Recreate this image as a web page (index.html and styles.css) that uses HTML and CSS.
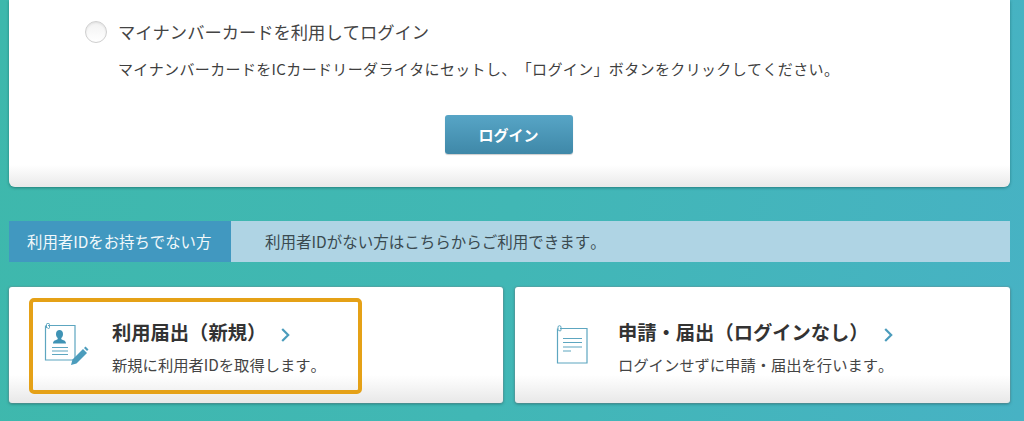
FILE: index.html
```html
<!DOCTYPE html>
<html lang="ja">
<head>
<meta charset="utf-8">
<title>ログイン</title>
<link rel="stylesheet" href="styles.css">
</head>
<body>
<main class="page">
  <section class="panel">
    <label class="radio-row">
      <span class="radio"></span>
      <span class="radio-label">マイナンバーカードを利用してログイン</span>
    </label>
    <p class="radio-note">マイナンバーカードをICカードリーダライタにセットし、「ログイン」ボタンをクリックしてください。</p>
    <div class="actions"><button class="login" type="button">ログイン</button></div>
  </section>

  <section class="info">
    <h2 class="info-head">利用者IDをお持ちでない方</h2>
    <p class="info-text">利用者IDがない方はこちらからご利用できます。</p>
  </section>

  <section class="cards">
    <a class="card card-new">
      <svg class="icon icon-new" width="46" height="44" viewBox="0 0 46 44" fill="none">
        <path d="M4 2.500H31V37H1.500V2.500" stroke="#5da6c0" stroke-width="1.200"/>
        <path d="M2.500 5V1.700a1.500 1.500 0 0 1 3 0V4.500a1 1 0 0 1-2 0" stroke="#5da6c0" stroke-width="1"/>
        <path d="M9 20.500c0-3 3-3.200 4.700-4.200V15c-1.200-1-1.700-2.300-1.700-4 0-2.600 1.500-4 3.500-4s3.500 1.400 3.500 4c0 1.700-.5 3-1.700 4v1.300c1.700 1 4.700 1.200 4.700 4.200z" fill="#3f93b5"/>
        <path d="M8 24.500H24M8 28H24M8 31.500H24" stroke="#5da6c0" stroke-width="1.200"/>
        <path d="M27 42l1.500-5.500L39 26l4 4-10.500 10.500z" fill="#4b9cbc"/>
        <path d="M40 25l1.500-1.500 3 3-1.500 1.500z" fill="#4b9cbc"/>
      </svg>
      <span class="card-body">
        <span class="card-title">利用届出（新規）<svg class="chev" width="9" height="14" viewBox="0 0 9 14" fill="none"><path d="M1.200 1l6 6-6 6" stroke="#4b9cbc" stroke-width="2.200"/></svg></span>
        <span class="card-desc">新規に利用者IDを取得します。</span>
      </span>
    </a>
    <a class="card card-guest">
      <svg class="icon icon-guest" width="34" height="40" viewBox="0 0 34 40" fill="none">
        <path d="M4 3.500H31V38H1.500V3.500" stroke="#5da6c0" stroke-width="1.200"/>
        <path d="M2 6V2.200a1.500 1.500 0 0 1 3 0V5a1 1 0 0 1-2 0" stroke="#5da6c0" stroke-width="1"/>
        <path d="M7 13.500H26M7 17.500H26M7 22H26M7 26H15" stroke="#5da6c0" stroke-width="1.200"/>
      </svg>
      <span class="card-body">
        <span class="card-title">申請・届出（ログインなし）<svg class="chev" width="9" height="14" viewBox="0 0 9 14" fill="none"><path d="M1.200 1l6 6-6 6" stroke="#4b9cbc" stroke-width="2.200"/></svg></span>
        <span class="card-desc">ログインせずに申請・届出を行います。</span>
      </span>
    </a>
  </section>
  <div class="highlight"></div>
</main>
</body>
</html>
```
FILE: styles.css
```css
* { box-sizing: border-box; }
html, body { margin: 0; height: 421px; overflow: hidden; }
body {
  background: linear-gradient(100deg, #3eb8ac 0%, #41b7b5 50%, #47b2c4 100%);
  font-family: "Noto Sans CJK JP", "Liberation Sans", sans-serif;
  color: #3a3a3a;
  text-spacing-trim: space-all;
  font-kerning: none;
}
.page { position: relative; height: 421px; padding: 0 14px 0 9px; }
.panel {
  height: 187px;
  padding: 19px 0 0 76px;
  background: linear-gradient(to bottom, #fff 0, #fff 165px, #e9e9e9 187px);
  border-radius: 0 0 6px 6px;
  box-shadow: 0 1px 3px rgba(0, 60, 60, .45);
}
.radio-row { display: flex; align-items: center; gap: 11px; height: 26px; }
.radio {
  width: 22px; height: 22px; border-radius: 50%;
  border: 1px solid #cfcfcf;
  background: linear-gradient(to bottom, #f2f2f2, #fff);
  box-shadow: inset 0 1px 2px rgba(0,0,0,.08);
}
.radio-label { font-size: 17.300px; line-height: 26px; color: #444; }
.radio-note { margin: 13px 0 0 33px; font-size: 15px; letter-spacing: .36px; line-height: 22px; color: #3f3f3f; }
.actions { display: flex; justify-content: center; margin: 35px 0 0 -78px; }
.login {
  width: 128px; height: 39px; padding: 0; border: 0; border-radius: 3px;
  background: linear-gradient(to bottom, #57a5c6, #3f88a8);
  color: #fff; font: 700 15px/39px "Noto Sans CJK JP", sans-serif;
  box-shadow: 0 1px 1px rgba(0,0,0,.2);
}
.info { display: flex; height: 41px; margin-top: 34px; background: #afd4e4; align-items: stretch; }
.info-head {
  width: 222px; margin: 0; padding-left: 18px;
  background: #4198c0; color: #f2f8fb;
  font-size: 15.400px; font-weight: 400; line-height: 41px;
}
.info-text { margin: 0; padding-left: 34px; font-size: 15.500px; line-height: 41px; color: #3a4a50; }
.cards { display: grid; grid-template-columns: 494px 495px; gap: 12px; margin-top: 25px; }
.card {
  display: flex; align-items: center;
  height: 116px; border-radius: 3px;
  background: linear-gradient(to bottom, #fff 0, #fff 88px, #e8e8e8 116px);
  box-shadow: 0 0 0 1px rgba(120, 150, 155, .35), 0 1px 3px rgba(0, 60, 60, .5);
}
.card-new { padding-left: 35px; }
.card-guest { padding-left: 41px; }
.icon { flex: none; }
.icon-new { margin-right: 22px; }
.icon-guest { margin-right: 28px; }
.card-body { display: flex; flex-direction: column; padding-top: 3px; }
.card-title { font-size: 19.300px; font-weight: 700; line-height: 26px; color: #333; display: flex; align-items: center; }
.chev { margin: 7px 0 0 15px; }
.card-desc { margin-top: 8px; font-size: 15.300px; line-height: 22px; color: #444; }
.highlight {
  position: absolute; left: 29px; top: 298px;
  width: 333px; height: 96px;
  border: 4px solid #e5a117; border-radius: 5px;
}
```
